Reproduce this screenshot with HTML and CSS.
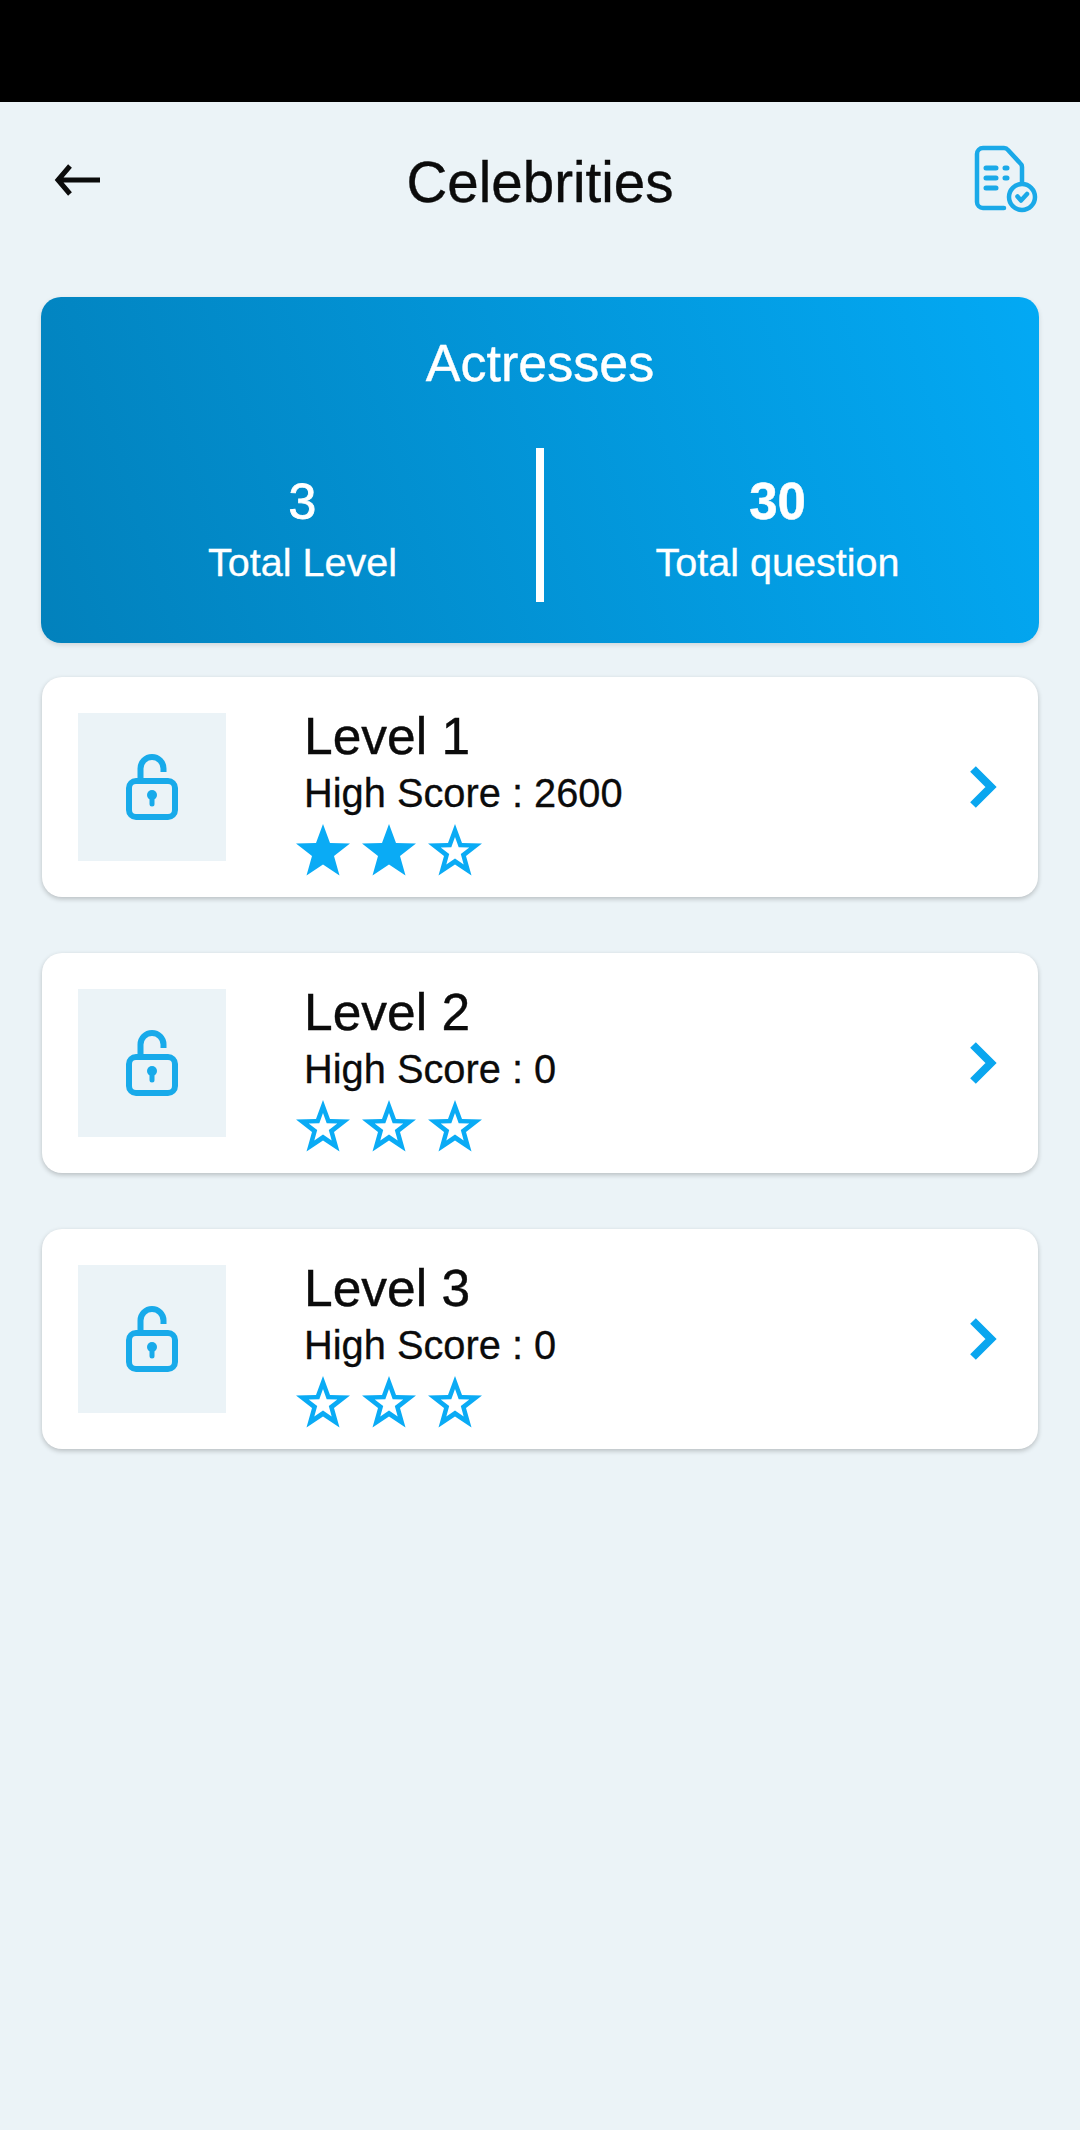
FILE: index.html
```html
<!DOCTYPE html>
<html lang="en">
<head>
<meta charset="utf-8">
<title>Celebrities</title>
<link rel="stylesheet" href="styles.css">
</head>
<body>
<div class="status-bar"></div>
<header class="header">
  <svg class="back" viewBox="0 0 48 34" aria-hidden="true"><path d="M5 17H47M17 3 5 17l12 14" /></svg>
  <h1 class="title">Celebrities</h1>
  <svg class="doc" viewBox="0 0 64 68" aria-hidden="true">
    <path class="doc-line" d="M30 63H9a6 6 0 0 1-6-6V9a6 6 0 0 1 6-6h21a5 5 0 0 1 4 2l12 13a5 5 0 0 1 2 4v19" />
    <path class="doc-bars" d="M12 23h10M12 33h10M12 43h10M31 23h2M31 33h2" />
    <circle class="doc-line doc-badge" cx="48" cy="52" r="13" />
    <path class="doc-check" d="m43.500 51.500 3.500 4 6-6.500" />
  </svg>
</header>
<section class="hero">
  <h2 class="hero-title">Actresses</h2>
  <div class="stats">
    <div class="stat">
      <div class="stat-num">3</div>
      <div class="stat-label">Total Level</div>
    </div>
    <div class="divider"></div>
    <div class="stat">
      <div class="stat-num stat-bold">30</div>
      <div class="stat-label">Total question</div>
    </div>
  </div>
</section>
<main class="levels">
  <article class="card">
    <div class="thumb"><svg class="lock" viewBox="0 0 52 66" aria-hidden="true"><use href="#lock-shape"/></svg></div>
    <div class="info">
      <div class="level">Level 1</div>
      <div class="score">High Score : 2600</div>
      <div class="stars">
        <svg class="star" viewBox="0 0 54 52"><use href="#star-full"/></svg>
        <svg class="star" viewBox="0 0 54 52"><use href="#star-full"/></svg>
        <svg class="star" viewBox="0 0 54 52"><use href="#star-empty"/></svg>
      </div>
    </div>
    <svg class="chev" viewBox="0 0 26 42" aria-hidden="true"><path d="M3 3l18 18L3 39"/></svg>
  </article>
  <article class="card">
    <div class="thumb"><svg class="lock" viewBox="0 0 52 66" aria-hidden="true"><use href="#lock-shape"/></svg></div>
    <div class="info">
      <div class="level">Level 2</div>
      <div class="score">High Score : 0</div>
      <div class="stars">
        <svg class="star" viewBox="0 0 54 52"><use href="#star-empty"/></svg>
        <svg class="star" viewBox="0 0 54 52"><use href="#star-empty"/></svg>
        <svg class="star" viewBox="0 0 54 52"><use href="#star-empty"/></svg>
      </div>
    </div>
    <svg class="chev" viewBox="0 0 26 42" aria-hidden="true"><path d="M3 3l18 18L3 39"/></svg>
  </article>
  <article class="card">
    <div class="thumb"><svg class="lock" viewBox="0 0 52 66" aria-hidden="true"><use href="#lock-shape"/></svg></div>
    <div class="info">
      <div class="level">Level 3</div>
      <div class="score">High Score : 0</div>
      <div class="stars">
        <svg class="star" viewBox="0 0 54 52"><use href="#star-empty"/></svg>
        <svg class="star" viewBox="0 0 54 52"><use href="#star-empty"/></svg>
        <svg class="star" viewBox="0 0 54 52"><use href="#star-empty"/></svg>
      </div>
    </div>
    <svg class="chev" viewBox="0 0 26 42" aria-hidden="true"><path d="M3 3l18 18L3 39"/></svg>
  </article>
</main>
<svg class="defs" aria-hidden="true">
  <defs>
    <g id="lock-shape">
      <rect class="lock-line" x="3" y="27" width="46" height="36" rx="7"/>
      <path class="lock-line" d="M14.500 26V14.500a11.500 11.500 0 0 1 23 0V18"/>
      <circle class="lock-key" cx="26" cy="41" r="5"/>
      <path class="lock-stem" d="M26 42v8"/>
    </g>
    <polygon id="star-full" class="star-fill" points="27,0 34,19 54,19.500 38,32 43.500,51.500 27,40.500 10.500,51.500 16,32 0,19.500 20,19"/>
    <path id="star-empty" class="star-fill" fill-rule="evenodd" d="M27 0 34 19 54 19.500 38 32 43.500 51.500 27 40.500 10.500 51.500 16 32 0 19.500 20 19ZM27 13 23.300 23.200 12.700 23.500 21.200 30.100 18.300 40.500 27 34.600 35.700 40.500 32.800 30.100 41.300 23.500 30.700 23.200Z"/>
  </defs>
</svg>
</body>
</html>
```
FILE: styles.css
```css
* { box-sizing: border-box; }
html, body { margin: 0; padding: 0; }
body {
  width: 1080px;
  height: 2130px;
  background: #ebf3f7;
  font-family: "Liberation Sans", Arial, sans-serif;
  color: #0b0b0b;
  overflow: hidden;
}
.status-bar { height: 102px; background: #000; }
.header {
  height: 158px;
  padding: 0 42px;
  display: grid;
  grid-template-columns: 1fr auto 1fr;
  align-items: center;
}
.back {
  width: 48px;
  height: 34px;
  margin: -3px 0 0 11px;
  fill: none;
  stroke: #0b0b0b;
  stroke-width: 5;
}
.title {
  margin: 4px 0 0;
  font-size: 56.500px;
  font-weight: 400;
  line-height: 64px;
  -webkit-text-stroke: .4px #0b0b0b;
}
.doc {
  justify-self: end;
  width: 64px;
  height: 68px;
  margin: -4px 0 0 0;
  fill: none;
  stroke: #1aa9e8;
  stroke-width: 4.500;
  stroke-linecap: round;
  stroke-linejoin: round;
}
.doc-line { fill: none; }
.doc-badge { fill: #ebf3f7; }
.doc-bars { stroke-width: 5; }
.doc-check { stroke-width: 4.500; }
.hero {
  margin: 37px 41px 0 41px;
  height: 346px;
  padding: 34px 28px 0;
  border-radius: 20px;
  background: linear-gradient(72deg, #0281bc 0%, #03a9f4 100%);
  box-shadow: 0 2px 5px rgba(0, 0, 0, .12);
  color: #fff;
}
.hero-title {
  margin: 0;
  font-size: 52px;
  font-weight: 400;
  line-height: 64px;
  text-align: center;
  -webkit-text-stroke: .4px #fff;
}
.stats {
  margin-top: 53px;
  display: grid;
  grid-template-columns: 1fr 8px 1fr;
}
.divider { background: #fff; height: 154px; }
.stat { text-align: center; padding-top: 24px; }
.stat-num { font-size: 50px; line-height: 60px; -webkit-text-stroke: .9px #fff; }
.stat-bold { font-size: 51px; font-weight: 700; -webkit-text-stroke: .5px #fff; }
.stat-label { font-size: 39.500px; line-height: 50px; margin-top: 5px; -webkit-text-stroke: .3px #fff; }
.levels {
  margin: 34px 42px 0;
  display: flex;
  flex-direction: column;
  gap: 56px;
}
.card {
  height: 220px;
  padding: 0 36px;
  background: #fff;
  border-radius: 20px;
  box-shadow: 0 2px 5px rgba(0, 0, 0, .22);
  display: flex;
  align-items: center;
}
.thumb {
  width: 148px;
  height: 148px;
  background: #ebf3f7;
  display: flex;
  align-items: center;
  justify-content: center;
  flex: none;
}
.lock { width: 52px; height: 66px; }
.lock-line { fill: none; stroke: #18aaea; stroke-width: 6; }
.lock-key { fill: #18aaea; }
.lock-stem { stroke: #18aaea; stroke-width: 5; stroke-linecap: round; fill: none; }
.info {
  align-self: flex-start;
  margin: 28px 0 0 78px;
  flex: 1;
}
.level { font-size: 51.500px; line-height: 62px; -webkit-text-stroke: .4px #0b0b0b; }
.score { font-size: 39.800px; line-height: 52px; -webkit-text-stroke: .3px #0b0b0b; }
.stars {
  margin: 5px 0 0 -8px;
  display: flex;
  gap: 12px;
}
.star { width: 54px; height: 52px; display: block; }
.star-fill { fill: #0aabf5; stroke: none; }
.chev {
  width: 28px;
  height: 42px;
  flex: none;
  margin-right: 5px;
  fill: none;
  stroke: #0aa6ef;
  stroke-width: 8;
}
.defs { position: absolute; width: 0; height: 0; }
```
